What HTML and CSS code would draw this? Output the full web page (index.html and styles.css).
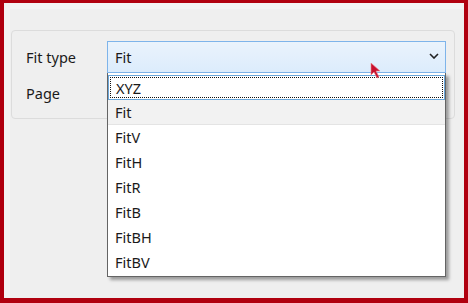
FILE: index.html
```html
<!DOCTYPE html>
<html lang="en">
<head>
    <meta charset="UTF-8">
    <title>Fit type</title>
    <link rel="stylesheet" href="styles.css">
</head>
<body>
    <div class="frame">
        <div class="group">
            <div class="row">
                <span class="label">Fit type</span>
                <div class="combo">
                    <span>Fit</span>
                    <svg class="chevron" width="10" height="6" viewBox="0 0 10 6">
                        <path d="M1 1 L5 5 L9 1" fill="none" stroke="#222" stroke-width="1.6"/>
                    </svg>
                    <ul class="list">
                        <li class="focused"><span>XYZ</span></li>
                        <li class="current">Fit</li>
                        <li>FitV</li>
                        <li>FitH</li>
                        <li>FitR</li>
                        <li>FitB</li>
                        <li>FitBH</li>
                        <li>FitBV</li>
                    </ul>
                </div>
            </div>
            <div class="row">
                <span class="label">Page</span>
            </div>
        </div>

        <!-- mouse pointer -->
        <svg class="pointer" width="14" height="18" viewBox="0 0 14 18">
            <path d="M1 1 L1 13 L4 10 L7 16 L9 15 L6 9 L10 9 Z" fill="#c8102e" stroke="#e88" stroke-width="0.6"/>
        </svg>
    </div>
</body>
</html>
```

FILE: styles.css
```css
html, body {
    margin: 0;
    padding: 0;
}
body {
    width: 468px;
    height: 303px;
    background-color: #b0000f;
    font-family: "Noto Sans", "Open Sans", sans-serif;
    font-size: 14.5px;
    color: #1a1a1a;
}
.frame {
    position: relative;
    box-sizing: border-box;
    margin: 3px 4px 0 4px;
    height: 295px;
    background-color: #efefef;
    border-left: 6px solid #f4f4f4;
    border-top: 6px solid #f3f3f3;
    padding: 21px 9px 0 1px;
}
.group {
    box-sizing: border-box;
    height: 89px;
    border: 1px solid #dcdcdc;
    border-radius: 4px;
    padding: 10px 8px 0 14px;
}
.row {
    display: flex;
    align-items: center;
    height: 32px;
}
.row + .row {
    margin-top: 5px;
    height: 30px;
}
.label {
    width: 81px;
}
.combo {
    position: relative;
    box-sizing: border-box;
    width: 339px;
    height: 32px;
    display: flex;
    align-items: center;
    justify-content: space-between;
    padding: 0 6px 0 7px;
    border: 1px solid #7eb4ea;
    background: linear-gradient(#eaf3fc, #dcecfc);
}
.chevron {
    margin-top: -2px;
}
.list {
    position: absolute;
    left: -1px;
    top: 31px;
    width: 339px;
    margin: 0;
    padding: 2px 0 1px;
    list-style: none;
    box-sizing: border-box;
    background-color: #fff;
    border: 1px solid #646464;
    border-top: none;
    box-shadow: 3px 3px 3px rgba(0, 0, 0, 0.35);
}
.list li {
    box-sizing: border-box;
    height: 25px;
    line-height: 25px;
    padding-left: 7px;
}
.list li.focused {
    padding: 1px;
    border: 1px solid #6aa6da;
    line-height: normal;
}
.list li.focused span {
    display: block;
    box-sizing: border-box;
    height: 21px;
    line-height: 20px;
    padding-left: 5px;
    border: 1px dotted #111;
}
.list li.current {
    background-color: #f2f2f2;
    border-bottom: 1px solid #e4e4e4;
}
.pointer {
    position: absolute;
    left: 360px;
    top: 53px;
}
```
